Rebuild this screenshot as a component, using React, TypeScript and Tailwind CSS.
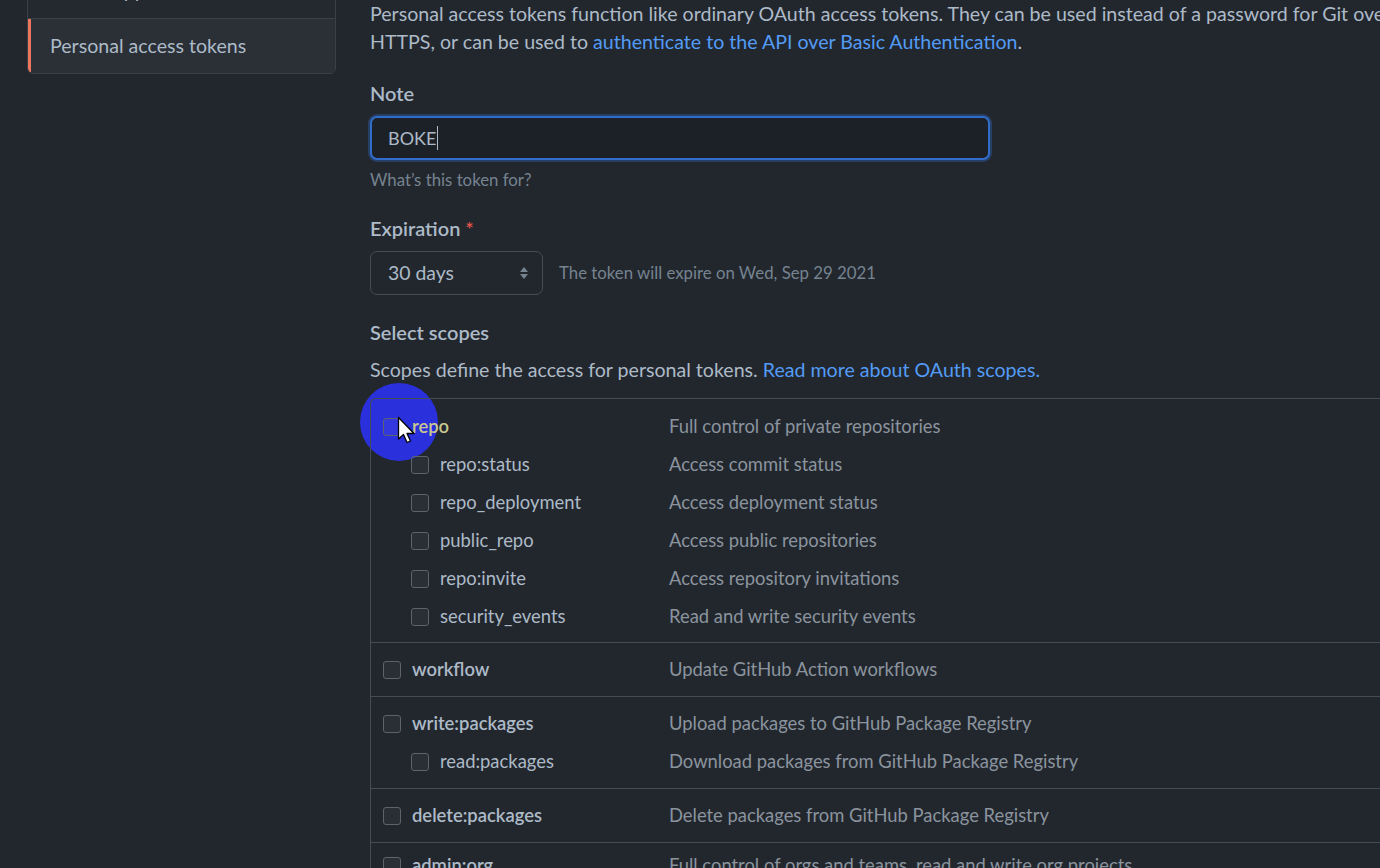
import React from "react";

const FONT = { fontFamily: '"Segoe UI", Lato, "Liberation Sans", sans-serif' };

type Row = { name: string; desc: string; sub?: boolean; hl?: boolean };

const groups: { rows: Row[]; pt: string; pb: string }[] = [
  {
    pt: "pt-[9px]",
    pb: "pb-[6px]",
    rows: [
      { name: "repo", desc: "Full control of private repositories", hl: true },
      { name: "repo:status", desc: "Access commit status", sub: true },
      { name: "repo_deployment", desc: "Access deployment status", sub: true },
      { name: "public_repo", desc: "Access public repositories", sub: true },
      { name: "repo:invite", desc: "Access repository invitations", sub: true },
      { name: "security_events", desc: "Read and write security events", sub: true },
    ],
  },
  { pt: "pt-[8px]", pb: "pb-[7px]", rows: [{ name: "workflow", desc: "Update GitHub Action workflows" }] },
  {
    pt: "pt-[8px]",
    pb: "pb-[7px]",
    rows: [
      { name: "write:packages", desc: "Upload packages to GitHub Package Registry" },
      { name: "read:packages", desc: "Download packages from GitHub Package Registry", sub: true },
    ],
  },
  { pt: "pt-[8px]", pb: "pb-[7px]", rows: [{ name: "delete:packages", desc: "Delete packages from GitHub Package Registry" }] },
  { pt: "pt-[4px]", pb: "pb-[7px]", rows: [{ name: "admin:org", desc: "Full control of orgs and teams, read and write org projects" }] },
];

function Checkbox() {
  return <span className="block w-[18px] h-[18px] shrink-0 rounded-[3px] border border-[#5b636d] bg-[rgba(255,255,255,0.04)]" />;
}

function ScopeRow({ row }: { row: Row }) {
  return (
    <div className={`flex items-center h-[38px] ${row.sub ? "pl-[40px]" : "pl-[12px]"}`}>
      <div className={`flex items-center gap-[11px] ${row.sub ? "w-[258px]" : "w-[286px]"}`}>
        <Checkbox />
        <span
          className={`text-[18.4px] whitespace-nowrap ${row.sub ? "" : "font-semibold"} ${
            row.hl ? "text-[#c9c78f]" : "text-[#adbac7]"
          }`}
        >
          {row.name}
        </span>
      </div>
      <span className="text-[18.4px] text-[#8b949e] whitespace-nowrap">{row.desc}</span>
    </div>
  );
}

export default function App() {
  return (
    <div className="w-[1380px] h-[868px] overflow-hidden bg-[#22272e] flex relative" style={FONT}>
      {/* Click highlight (behind content) */}
      <div className="absolute z-0 left-[360px] top-[383px] w-[78px] h-[78px] rounded-full bg-[#2a30dc] pointer-events-none" />

      {/* Sidebar */}
      <div className="relative z-10 w-[370px] shrink-0 pl-[27px] pr-[34px]">
        <div className="mt-[-37px] rounded-b-[6px] border border-[#3a4048] overflow-hidden">
          <div className="h-[55px] flex items-center pl-[21px] bg-[#24292f] border-b border-[#3a4048] text-[19.6px] text-[#adbac7]">
            OAuth Apps
          </div>
          <div className="h-[54px] flex items-center pl-[19px] bg-[#2b3037] border-l-[3px] border-[#ec775c] text-[19.6px] text-[#adbac7]">
            Personal access tokens
          </div>
        </div>
      </div>

      {/* Main */}
      <div className="relative z-10 w-[1300px] shrink-0">
        <p className="text-[19.6px] leading-[28px] text-[#adbac7] whitespace-nowrap">
          Personal access tokens function like ordinary OAuth access tokens. They can be used instead of a password for Git over
          <br />
          HTTPS, or can be used to <span className="text-[#539bf5]">authenticate to the API over Basic Authentication</span>.
        </p>

        <div className="mt-[26px] text-[20px] leading-[22px] font-semibold text-[#adbac7]">Note</div>
        <div className="mt-[12px] w-[620px] h-[44px] rounded-[7px] border-2 border-[#316dca] bg-[#1c2128] shadow-[0_0_0_2px_rgba(49,109,202,0.35)] flex items-center pl-[16px]">
          <span className="text-[18px] text-[#adbac7]">BOKE</span>
          <span className="w-px h-[24px] bg-[#adbac7] ml-px" />
        </div>
        <div className="mt-[10px] text-[16.8px] leading-[20px] text-[#768390]">What’s this token for?</div>

        <div className="mt-[27px] text-[20px] leading-[22px] font-semibold text-[#adbac7]">
          Expiration <span className="text-[#e5534b]">*</span>
        </div>
        <div className="mt-[12px] flex items-center gap-[16px]">
          <div className="w-[173px] h-[44px] rounded-[7px] border border-[#444c56] bg-[#22272e] flex items-center justify-between pl-[17px] pr-[12px]">
            <span className="text-[19.4px] text-[#adbac7]">30 days</span>
            <svg width="12" height="16" viewBox="0 0 12 16">
              <path d="M6 2 L10 7 H2 Z" fill="#768390" />
              <path d="M6 14 L10 9 H2 Z" fill="#768390" />
            </svg>
          </div>
          <span className="text-[16.8px] text-[#768390]">The token will expire on Wed, Sep 29 2021</span>
        </div>

        <div className="mt-[26px] text-[20px] leading-[22px] font-semibold text-[#adbac7]">Select scopes</div>
        <div className="mt-[13px] text-[19.6px] leading-[28px] text-[#adbac7] whitespace-nowrap">
          Scopes define the access for personal tokens. <span className="text-[#539bf5]">Read more about OAuth scopes.</span>
        </div>

        <div className="mt-[14px] border-l border-t border-[#444c56] rounded-tl-[6px]">
          {groups.map((g, i) => (
            <div key={i} className={`${g.pt} ${g.pb} ${i > 0 ? "border-t border-[#444c56]" : ""}`}>
              {g.rows.map((r) => (
                <ScopeRow key={r.name} row={r} />
              ))}
            </div>
          ))}
        </div>
      </div>

      {/* Cursor */}
      <svg className="absolute z-20 left-[397px] top-[416px] pointer-events-none" width="20" height="30" viewBox="0 0 20 30">
        <path d="M1.5 1.5 L1.5 23 L6.5 18.5 L10 26.5 L13.5 25 L10 17.5 L17 17.5 Z" fill="#ffffff" stroke="#000000" strokeWidth="1.3" strokeLinejoin="round" />
      </svg>
    </div>
  );
}
